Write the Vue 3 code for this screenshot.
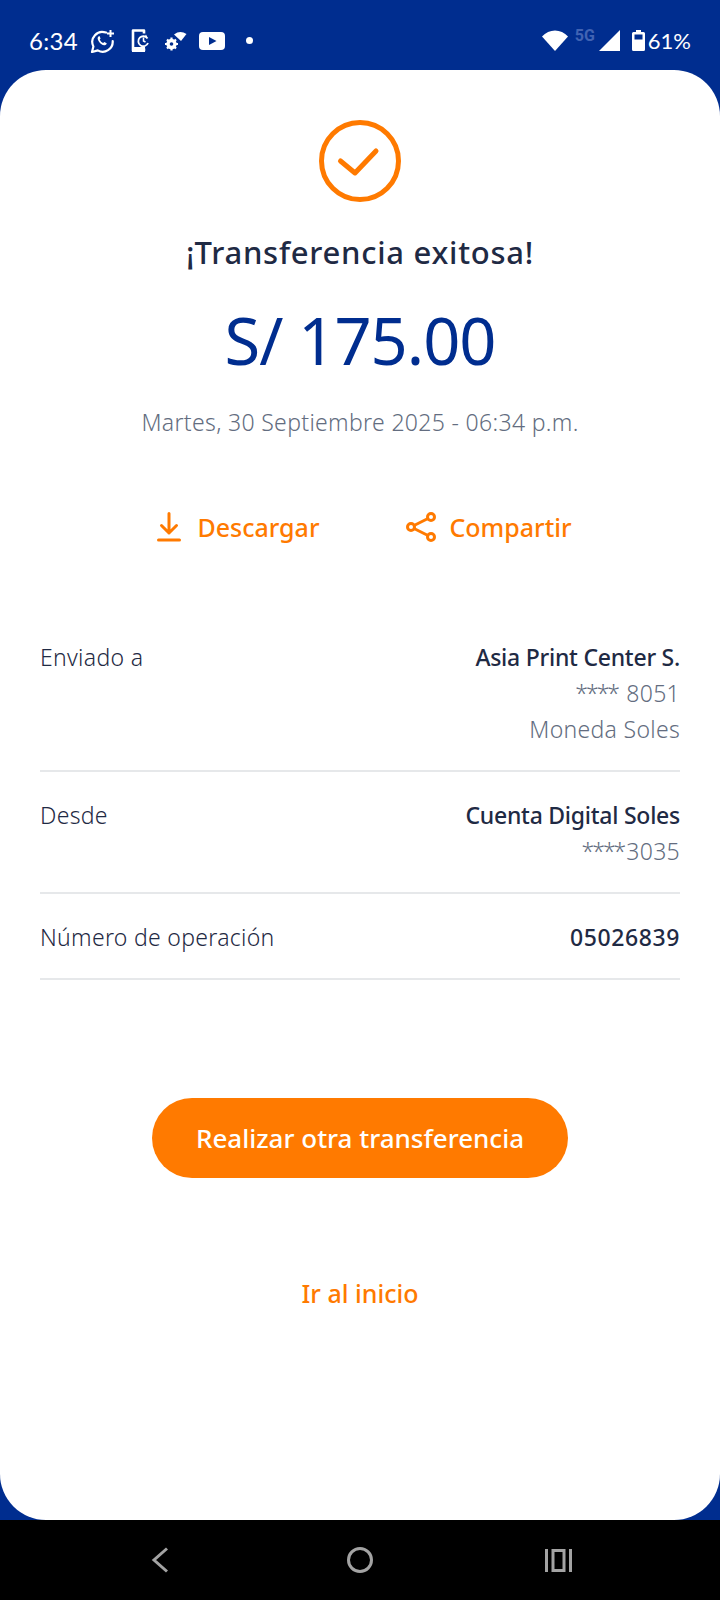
<script setup>
const rows = [
  { label: 'Enviado a', value: 'Asia Print Center S.', extra: [{ stars: '****', text: ' 8051' }, { text: 'Moneda Soles' }] },
  { label: 'Desde', value: 'Cuenta Digital Soles', extra: [{ stars: '****', text: '3035' }] },
  { label: 'Número de operación', value: '05026839', extra: [], isNumber: true }
]
</script>

<template>
  <div class="screen">
    <!-- Android status bar -->
    <div class="status-bar">
      <div class="status-left">
        <span class="clock">6:34</span>
        <svg class="ic-wa" width="26" height="24" viewBox="0 0 26 24" fill="none">
          <path d="M16 3.6A10 10 0 0 0 3.4 17.4L2 23l5.8-1.6A10 10 0 0 0 22.7 12" stroke="#fff" stroke-width="2.2" stroke-linecap="round" stroke-linejoin="round"/>
          <path d="M8.4 7.6c-1.2 1-1 3 .6 5.2 1.700 2.300 3.900 3.800 5.800 3.400 1.100-.2 1.900-1 1.900-1.900l-2.400-1.300-1.100 1c-1.400-.5-2.900-2-3.500-3.500l.9-1.100-1.100-2.500z" fill="#fff"/>
          <path d="M20.500 1v7M17 4.500h7" stroke="#fff" stroke-width="2"/>
        </svg>
        <svg class="ic-phone" width="19" height="25" viewBox="0 0 19 25" fill="none">
          <path d="M13 5.500V2.500H2V22.500H13V20.500" stroke="#fff" stroke-width="2.600" stroke-linejoin="round"/>
          <path d="M1 19h13v5H1z" fill="#fff"/>
          <path d="M16.500 10.500A5 5 0 1 0 17 15" stroke="#fff" stroke-width="1.800"/>
          <path d="M15 6.500l-1.500 2.500 3 .5z" fill="#fff"/>
          <path d="M12.500 9.500v3.500l2 1" stroke="#fff" stroke-width="1.500"/>
        </svg>
        <svg class="ic-gear" width="23" height="21" viewBox="0 0 23 21">
          <path d="M10 4.500a11 11 0 0 1 12.500-.5L17 11z" fill="#fff"/>
          <circle cx="7.500" cy="14" r="3.700" fill="none" stroke="#fff" stroke-width="3"/>
          <path d="M7.500 7.500v13M1 14h13M3 9.500l9 9M12 9.500l-9 9" stroke="#fff" stroke-width="2.200"/>
          <circle cx="7.500" cy="14" r="1.800" fill="#002d8f"/>
        </svg>
        <svg class="ic-yt" width="26" height="18" viewBox="0 0 26 18">
          <rect width="26" height="18" rx="4" fill="#fff"/>
          <path d="M10 5l7.500 4-7.500 4z" fill="#002d8f"/>
        </svg>
        <span class="dot"></span>
      </div>
      <div class="status-right">
        <svg class="ic-wifi" width="26" height="21" viewBox="0 0 26 21">
          <path d="M0 6.500C7-1.500 19-1.500 26 6.500L13 21z" fill="#fff"/>
        </svg>
        <span class="net">5G</span>
        <svg class="ic-signal" width="21" height="21" viewBox="0 0 21 21">
          <path d="M21 0v21H0z" fill="#fff"/>
        </svg>
        <svg class="ic-batt" width="13" height="21" viewBox="0 0 13 21">
          <path d="M4 0h5v2h2.500A1.500 1.500 0 0 1 13 3.500V19.500A1.500 1.500 0 0 1 11.500 21H1.500A1.500 1.500 0 0 1 0 19.500V3.500A1.500 1.500 0 0 1 1.500 2H4z" fill="#fff"/>
          <rect x="2.500" y="4.500" width="8" height="5" fill="#002d8f"/>
        </svg>
        <span class="pct">61%</span>
      </div>
    </div>

    <div class="card">
      <svg class="check" width="82" height="82" viewBox="0 0 82 82" fill="none">
        <circle cx="41" cy="41" r="38.500" stroke="#ff7a00" stroke-width="5"/>
        <path d="M21.500 41L36 53 57 31" stroke="#ff7a00" stroke-width="5" stroke-linecap="round" stroke-linejoin="round"/>
      </svg>
      <h1 class="title">¡Transferencia exitosa!</h1>
      <div class="amount">S/ 175.00</div>
      <div class="date">Martes, 30 Septiembre 2025 - 06:34 p.m.</div>

      <div class="actions">
        <a class="action">
          <svg width="24" height="30" viewBox="0 0 24 30" fill="none">
            <path d="M12 1.500V21M4.500 13.500L12 21l7.500-7.500" stroke="#ff7a00" stroke-width="3" stroke-linecap="round" stroke-linejoin="round"/>
            <path d="M1.500 28h21" stroke="#ff7a00" stroke-width="3" stroke-linecap="round"/>
          </svg>
          <span>Descargar</span>
        </a>
        <a class="action share">
          <svg width="30" height="30" viewBox="0 0 30 30" fill="none">
            <circle cx="5" cy="15" r="3.500" stroke="#ff7a00" stroke-width="3"/>
            <circle cx="25" cy="5" r="3.500" stroke="#ff7a00" stroke-width="3"/>
            <circle cx="25" cy="25" r="3.500" stroke="#ff7a00" stroke-width="3"/>
            <path d="M8 13.500l14-7M8 16.500l14 7" stroke="#ff7a00" stroke-width="3"/>
          </svg>
          <span>Compartir</span>
        </a>
      </div>

      <div class="details">
        <div v-for="row in rows" :key="row.label" class="row">
          <div class="label">{{ row.label }}</div>
          <div class="values">
            <div class="value" :class="{ number: row.isNumber }">{{ row.value }}</div>
            <div v-for="line in row.extra" :key="line.text" class="extra">
              <span v-if="line.stars" class="stars">{{ line.stars }}</span>{{ line.text }}
            </div>
          </div>
        </div>
      </div>

      <button class="primary">Realizar otra transferencia</button>
      <a class="home">Ir al inicio</a>
    </div>

    <!-- Android nav bar -->
    <div class="nav-bar">
      <svg width="18" height="26" viewBox="0 0 18 26" fill="none">
        <path d="M16 1.500L3 13l13 11.500" stroke="#a3a3a3" stroke-width="3"/>
      </svg>
      <svg class="nav-home" width="26" height="26" viewBox="0 0 26 26" fill="none">
        <circle cx="13" cy="13" r="11.500" stroke="#a3a3a3" stroke-width="3"/>
      </svg>
      <svg width="27" height="23" viewBox="0 0 27 23" fill="none">
        <path d="M1.500 0v23M25.500 0v23" stroke="#a3a3a3" stroke-width="3"/>
        <rect x="8" y="1.500" width="11" height="20" stroke="#a3a3a3" stroke-width="3"/>
      </svg>
    </div>
  </div>
</template>

<style scoped>
.screen {
  width: 720px;
  height: 1600px;
  display: flex;
  flex-direction: column;
  background: #002d8f;
  font-family: "Noto Sans", "Liberation Sans", sans-serif;
  overflow: hidden;
}

.status-bar {
  height: 70px;
  flex: none;
  display: flex;
  align-items: center;
  justify-content: space-between;
  padding: 11px 29px 0 29px;
  box-sizing: border-box;
  color: #fff;
  font-family: Lato, "Noto Sans", sans-serif;
}

.status-left,
.status-right {
  display: flex;
  align-items: center;
}

.clock {
  font-size: 24px;
  width: 61px;
  letter-spacing: 0.3px;
}

.ic-phone { margin-left: 15px; }
.ic-gear { margin-left: 14px; }
.ic-yt { margin-left: 12px; }

.dot {
  width: 7px;
  height: 7px;
  border-radius: 50%;
  background: #fff;
  margin-left: 21px;
}

.net {
  font-family: Roboto, sans-serif;
  font-size: 16px;
  font-weight: 700;
  color: #4163b3;
  width: 20px;
  margin: 0 4px 10px 7px;
}

.ic-batt { margin-left: 12px; }

.pct {
  font-size: 22px;
  margin-left: 3px;
}

.card {
  flex: 1;
  background: #fff;
  border-radius: 46px;
  display: flex;
  flex-direction: column;
  align-items: center;
  padding: 50px 40px 0;
  box-sizing: border-box;
}

.check { flex: none; }

.title {
  margin: 30px 0 0;
  font-size: 31px;
  line-height: 40px;
  font-weight: 500;
  letter-spacing: 0.75px;
  color: #1f2a44;
}

.amount {
  margin-top: 23px;
  font-size: 65px;
  line-height: 90px;
  letter-spacing: -1px;
  color: #002d8f;
}

.date {
  margin-top: 21px;
  font-size: 23px;
  line-height: 32px;
  font-weight: 300;
  letter-spacing: 0.33px;
  color: #636d80;
}

.actions {
  margin-top: 71px;
  margin-left: 9px;
  display: flex;
  gap: 87px;
}

.action {
  display: flex;
  align-items: center;
  gap: 16px;
  color: #ff7a00;
  font-size: 25px;
  line-height: 36px;
  font-weight: 500;
}

.action.share { gap: 13px; }

.details {
  width: 100%;
  margin-top: 69px;
}

.row {
  display: flex;
  justify-content: space-between;
  padding: 25px 0 23px;
  border-bottom: 2px solid #e6e8ea;
  font-size: 23px;
  line-height: 36px;
}

.label {
  color: #1f2a44;
  font-weight: 300;
  letter-spacing: 0.3px;
}

.values { text-align: right; }

.value {
  color: #1f2a44;
  font-weight: 500;
  letter-spacing: -0.25px;
}

.value.number { letter-spacing: 0.6px; }

.extra {
  color: #636d80;
  font-weight: 300;
  letter-spacing: 0.3px;
  white-space: pre;
}

.stars { letter-spacing: -2px; margin-right: 2px; }

.primary {
  margin-top: 118px;
  width: 416px;
  height: 80px;
  border: 0;
  border-radius: 40px;
  background: #ff7a00;
  color: #fff;
  font-family: inherit;
  font-size: 26px;
  font-weight: 500;
}

.home {
  margin-top: 97px;
  color: #ff7a00;
  font-size: 25px;
  line-height: 36px;
  font-weight: 500;
}

.nav-bar {
  height: 80px;
  flex: none;
  background: #000;
  display: flex;
  align-items: center;
  padding: 0 148px 0 151px;
  justify-content: space-between;
}

.nav-home { margin-left: 6px; }
</style>
